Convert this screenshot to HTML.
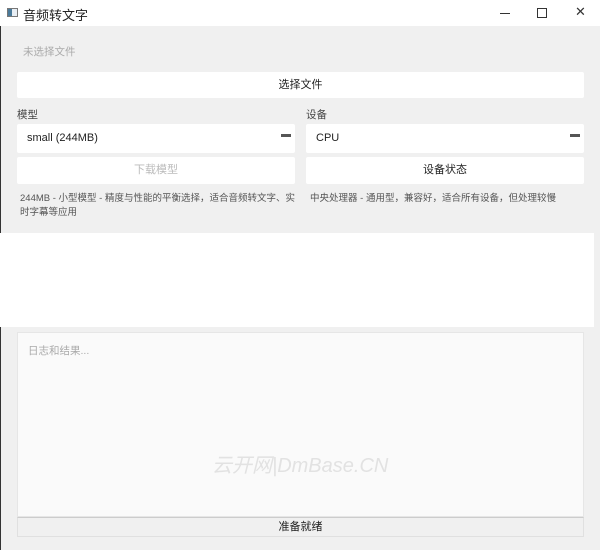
<!DOCTYPE html>
<html><head><meta charset="utf-8"><style>
*{margin:0;padding:0;box-sizing:border-box}
body{width:600px;height:550px;background:#f0f0f0;font-family:"Liberation Sans","Noto Sans CJK SC",sans-serif;position:relative;overflow:hidden;color:#222}
.a{position:absolute}
.tb{left:0;top:0;width:600px;height:26px;background:#fff}
.btn{background:#fff;font-size:11px;text-align:center;border-radius:2px}
.cb{background:#fff;font-size:11px;padding-left:10px;border-radius:2px}
.cb i{position:absolute;right:4px;top:10px;width:10px;height:3px;background:#555}
.d{font-size:9.5px;color:#555;line-height:14px}
</style></head><body>
<div class="a tb"></div>
<div class="a" style="left:0;top:26px;width:1px;height:524px;background:#333"></div>
<div class="a" style="left:7px;top:8px;width:11px;height:9px;border:1px solid #777;background:#e8eef4"><div style="width:4px;height:7px;background:#4a7a9a"></div></div>
<div class="a" style="left:23px;top:5px;font-size:13px">音频转文字</div>
<div class="a" style="left:500px;top:13px;width:10px;height:1px;background:#333"></div>
<div class="a" style="left:537px;top:8px;width:10px;height:10px;border:1px solid #333"></div>
<div class="a" style="left:575px;top:4px;font-size:13px;color:#333">✕</div>
<div class="a" style="left:23px;top:44px;font-size:10.5px;color:#aaa">未选择文件</div>
<div class="a btn" style="left:17px;top:72px;width:567px;height:26px;line-height:26px">选择文件</div>
<div class="a" style="left:17px;top:107px;font-size:10.5px;color:#444">模型</div>
<div class="a" style="left:306px;top:107px;font-size:10.5px;color:#444">设备</div>
<div class="a cb" style="left:17px;top:124px;width:278px;height:29px;line-height:29px">small (244MB)<i></i></div>
<div class="a cb" style="left:306px;top:124px;width:278px;height:29px;line-height:29px">CPU<i></i></div>
<div class="a btn" style="left:17px;top:157px;width:278px;height:27px;line-height:27px;color:#bbb">下载模型</div>
<div class="a btn" style="left:306px;top:157px;width:278px;height:27px;line-height:27px">设备状态</div>
<div class="a d" style="left:20px;top:192px;width:275px">244MB - 小型模型 - 精度与性能的平衡选择，适合音频转文字、实时字幕等应用</div>
<div class="a d" style="left:310px;top:192px">中央处理器 - 通用型，兼容好，适合所有设备，但处理较慢</div>
<div class="a" style="left:0;top:233px;width:594px;height:94px;background:#fff"></div>
<div class="a" style="left:17px;top:332px;width:567px;height:185px;background:#fafafa;border:1px solid #e6e6e6"></div>
<div class="a" style="left:28px;top:343px;font-size:10.5px;color:#aaa">日志和结果...</div>
<div class="a" style="left:212px;top:449px;font-size:20px;font-style:italic;color:#e2e2e2">云开网|DmBase.CN</div>
<div class="a" style="left:17px;top:517px;width:567px;height:20px;border:1px solid #e0e0e0;border-top-color:#ccc;text-align:center;font-size:11px;line-height:18px">准备就绪</div>
</body></html>
